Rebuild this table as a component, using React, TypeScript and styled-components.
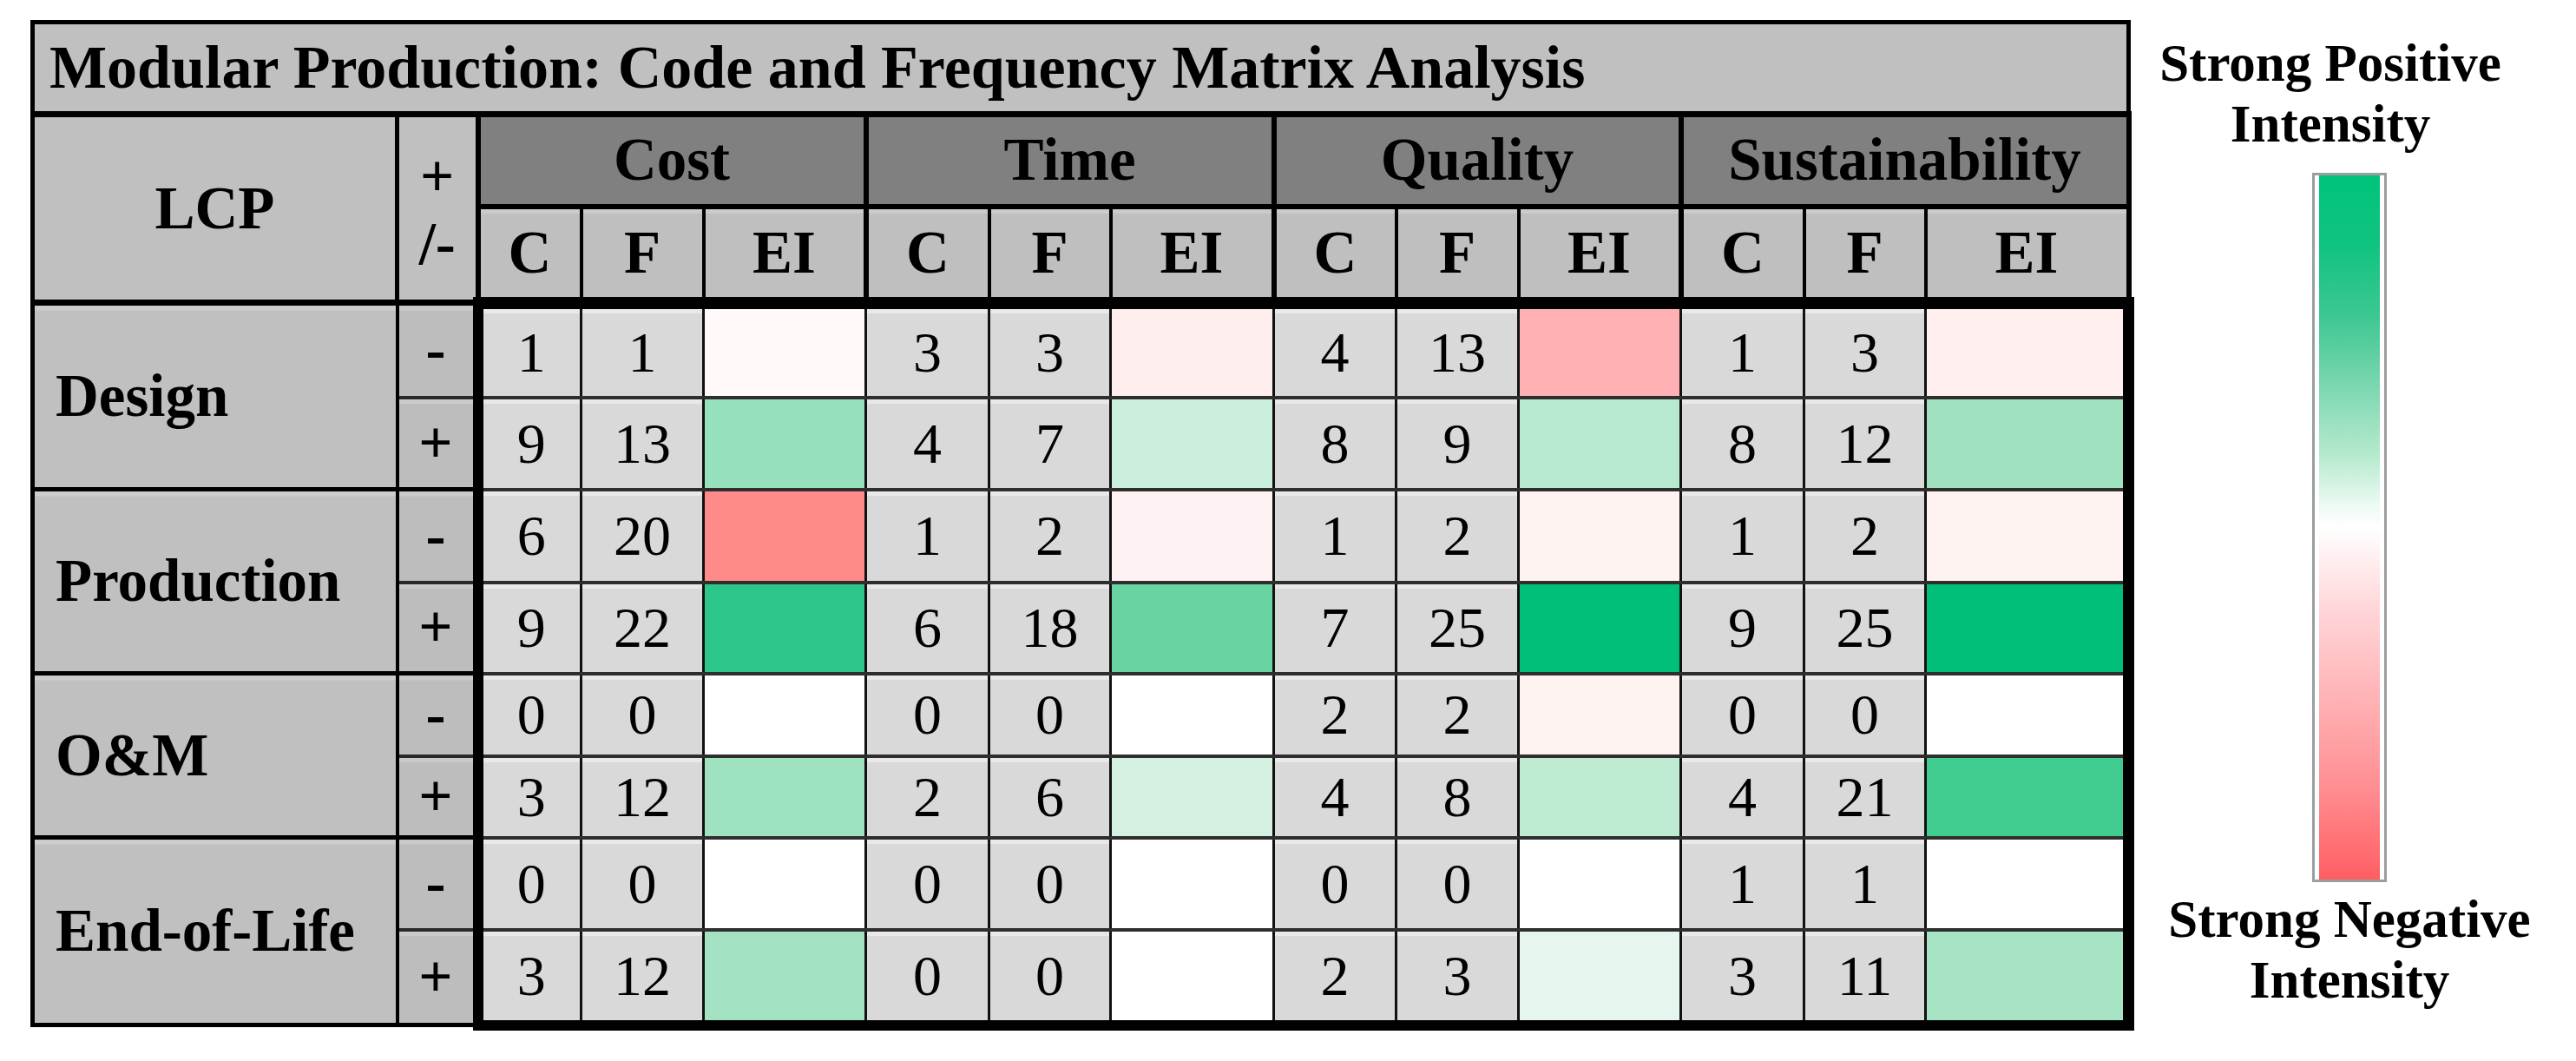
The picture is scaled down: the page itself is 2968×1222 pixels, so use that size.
import React from "react";
import styled, { createGlobalStyle, css } from "styled-components";

const GlobalStyle = createGlobalStyle`
  html, body { margin: 0; padding: 0; background: #ffffff; }
  body { font-family: "Liberation Serif", "Times New Roman", serif; color: #000; }
`;

const Page = styled.div`
  display: flex;
  align-items: flex-start;
  width: 2968px;
  height: 1222px;
  padding: 23px 0 0 35px;
  box-sizing: border-box;
  background: #ffffff;
`;

const Matrix = styled.table`
  border-collapse: collapse;
  table-layout: fixed;
  font-family: "Liberation Serif", "Times New Roman", serif;
  font-size: 69px;
  line-height: 1;
  color: #000;
`;

const Col = styled.col<{ $w: number }>`
  width: ${(p) => p.$w}px;
`;

const Row = styled.tr<{ $h: number }>`
  height: ${(p) => p.$h}px;
`;

const TitleCell = styled.td`
  background: #c0c0c0;
  border: 5px solid #000;
  border-bottom-width: 7px;
  padding: 0 0 0 17px;
  text-align: left;
  font-weight: 700;
  font-size: 70px;
  white-space: nowrap;
`;

const CornerCell = styled.td<{ $twoLine?: boolean }>`
  background: #c0c0c0;
  border: 5px solid #000;
  border-right-width: 4px;
  border-bottom-width: 7px;
  text-align: center;
  font-weight: 700;
  padding: 0;
  ${(p) =>
    p.$twoLine &&
    css`
      line-height: 78px;
      padding-top: 4px;
    `}
`;

const GroupCell = styled.td`
  background: #808080;
  border: 6px solid #000;
  border-top-width: 7px;
  border-bottom-width: 6px;
  text-align: center;
  font-weight: 700;
  padding: 0;
`;

const SubCell = styled.td<{ $groupStart?: boolean; $groupEnd?: boolean }>`
  background: linear-gradient(to bottom, #cbcbcb 0, #cbcbcb 5px, #bfbfbf 5px);
  border-left: ${(p) => (p.$groupStart ? "6px" : "4px")} solid #000;
  border-right: ${(p) => (p.$groupEnd ? "6px" : "4px")} solid #000;
  border-bottom: 14px solid #000;
  text-align: center;
  font-weight: 700;
  padding: 0;
`;

const PhaseCell = styled.td`
  background: linear-gradient(to bottom, #cdcdcd 0, #cdcdcd 5px, #c0c0c0 5px);
  border: 5px solid #000;
  border-right-width: 4px;
  text-align: left;
  padding: 0 0 0 24px;
  font-weight: 700;
  white-space: nowrap;
`;

const SignCell = styled.td<{ $first: boolean; $last: boolean }>`
  background: linear-gradient(to bottom, #cacaca 0, #cacaca 5px, #bdbdbd 5px);
  border-left: 4px solid #000;
  border-top: ${(p) => (p.$first ? "5px solid #000" : "4px solid #2a2a2a")};
  border-bottom: ${(p) => (p.$last ? "5px solid #000" : "4px solid #2a2a2a")};
  text-align: center;
  font-weight: 700;
  padding: 0;
`;

const ValueCell = styled.td<{ $edge: boolean; $bottom: boolean }>`
  background: linear-gradient(to bottom, #e9e9e9 0, #e9e9e9 5px, #d9d9d9 5px);
  border-left: ${(p) => (p.$edge ? "12px solid #000" : "3px solid #111")};
  border-right: 3px solid #111;
  border-top: 4px solid #2e2e2e;
  border-bottom: ${(p) => (p.$bottom ? "12px solid #000" : "4px solid #2e2e2e")};
  text-align: center;
  font-size: 66px;
  font-weight: 400;
  padding: 0;
`;

const EiCell = styled.td<{ $edge: boolean; $bottom: boolean }>`
  border-left: 3px solid #111;
  border-right: ${(p) => (p.$edge ? "13px solid #000" : "3px solid #111")};
  border-top: 4px solid #2e2e2e;
  border-bottom: ${(p) => (p.$bottom ? "12px solid #000" : "4px solid #2e2e2e")};
  padding: 0;
`;

const Legend = styled.div`
  width: 480px;
  margin: 15px 0 0 8px;
  display: flex;
  flex-direction: column;
  align-items: center;
`;

const LegendLabel = styled.div<{ $shift: number }>`
  font-family: "Liberation Serif", "Times New Roman", serif;
  font-weight: 700;
  font-size: 61px;
  line-height: 70px;
  text-align: center;
  white-space: nowrap;
  margin-right: ${(p) => p.$shift}px;
`;

const Scale = styled.div`
  width: 86px;
  height: 817px;
  box-sizing: border-box;
  margin: 21px 0 8px;
  border: 3px solid #9a9e9e;
  padding: 0 5px;
  background: #ffffff;
`;

const ScaleFill = styled.div`
  height: 100%;
  background: linear-gradient(
    to bottom,
    #00c47b 0%,
    #10c380 10%,
    #3dc792 20%,
    #7cd7b0 30%,
    #b7eacf 40%,
    #eefaf4 47%,
    #ffffff 50%,
    #fff0f1 54%,
    #ffd5d8 62%,
    #ffb3b6 74%,
    #ff8e92 87%,
    #ff5e62 100%
  );
`;

type Entry = [number, number, string];
type DataRow = { sign: string; h: number; cells: Entry[] };
type Phase = { name: string; rows: DataRow[] };

const columns = [420, 93, 119, 141, 187, 142, 140, 188, 141, 141, 187, 142, 140, 234];
const groups = ["Cost", "Time", "Quality", "Sustainability"];

const phases: Phase[] = [
  {
    name: "Design",
    rows: [
      { sign: "-", h: 109, cells: [[1, 1, "#fff9f9"], [3, 3, "#ffeeee"], [4, 13, "#ffb0b2"], [1, 3, "#ffefef"]] },
      { sign: "+", h: 106, cells: [[9, 13, "#96e0bb"], [4, 7, "#c9eedb"], [8, 9, "#b6e9cf"], [8, 12, "#a0e2c0"]] },
    ],
  },
  {
    name: "Production",
    rows: [
      { sign: "-", h: 107, cells: [[6, 20, "#ff8a8a"], [1, 2, "#fff2f2"], [1, 2, "#fff3f2"], [1, 2, "#fff3f2"]] },
      { sign: "+", h: 105, cells: [[9, 22, "#2ec78b"], [6, 18, "#6ad3a2"], [7, 25, "#00bf78"], [9, 25, "#00bf78"]] },
    ],
  },
  {
    name: "O&M",
    rows: [
      { sign: "-", h: 95, cells: [[0, 0, "#ffffff"], [0, 0, "#ffffff"], [2, 2, "#fff3f2"], [0, 0, "#ffffff"]] },
      { sign: "+", h: 94, cells: [[3, 12, "#9fe2c0"], [2, 6, "#d3f0e1"], [4, 8, "#c0ebd3"], [4, 21, "#40cb8f"]] },
    ],
  },
  {
    name: "End-of-Life",
    rows: [
      { sign: "-", h: 106, cells: [[0, 0, "#ffffff"], [0, 0, "#ffffff"], [0, 0, "#ffffff"], [1, 1, "#ffffff"]] },
      { sign: "+", h: 110, cells: [[3, 12, "#a3e3c3"], [0, 0, "#ffffff"], [2, 3, "#e6f6ee"], [3, 11, "#a6e4c3"]] },
    ],
  },
];

export default function App() {
  return (
    <>
      <GlobalStyle />
      <Page>
        <Matrix>
          <colgroup>
            {columns.map((w, i) => (
              <Col key={i} $w={w} />
            ))}
          </colgroup>
          <tbody>
            <Row $h={106}>
              <TitleCell colSpan={14}>Modular Production: Code and Frequency Matrix Analysis</TitleCell>
            </Row>
            <Row $h={106}>
              <CornerCell rowSpan={2}>LCP</CornerCell>
              <CornerCell rowSpan={2} $twoLine>
                +<br />/-
              </CornerCell>
              {groups.map((g) => (
                <GroupCell key={g} colSpan={3}>
                  {g}
                </GroupCell>
              ))}
            </Row>
            <Row $h={111}>
              {groups.map((g) =>
                ["C", "F", "EI"].map((s, i) => (
                  <SubCell key={g + s} $groupStart={i === 0} $groupEnd={i === 2}>
                    {s}
                  </SubCell>
                ))
              )}
            </Row>
            {phases.map((phase, pi) =>
              phase.rows.map((row, ri) => {
                const isBottom = pi === phases.length - 1 && ri === phase.rows.length - 1;
                return (
                  <Row key={phase.name + ri} $h={row.h}>
                    {ri === 0 && <PhaseCell rowSpan={2}>{phase.name}</PhaseCell>}
                    <SignCell $first={ri === 0} $last={ri === phase.rows.length - 1}>
                      {row.sign}
                    </SignCell>
                    {row.cells.map(([c, f, ei], gi) => (
                      <React.Fragment key={gi}>
                        <ValueCell $edge={gi === 0} $bottom={isBottom}>
                          {c}
                        </ValueCell>
                        <ValueCell $edge={false} $bottom={isBottom}>
                          {f}
                        </ValueCell>
                        <EiCell
                          $edge={gi === row.cells.length - 1}
                          $bottom={isBottom}
                          style={{ background: ei }}
                        />
                      </React.Fragment>
                    ))}
                  </Row>
                );
              })
            )}
          </tbody>
        </Matrix>
        <Legend>
          <LegendLabel $shift={44}>
            Strong Positive
            <br />
            Intensity
          </LegendLabel>
          <Scale>
            <ScaleFill />
          </Scale>
          <LegendLabel $shift={0}>
            Strong Negative
            <br />
            Intensity
          </LegendLabel>
        </Legend>
      </Page>
    </>
  );
}
